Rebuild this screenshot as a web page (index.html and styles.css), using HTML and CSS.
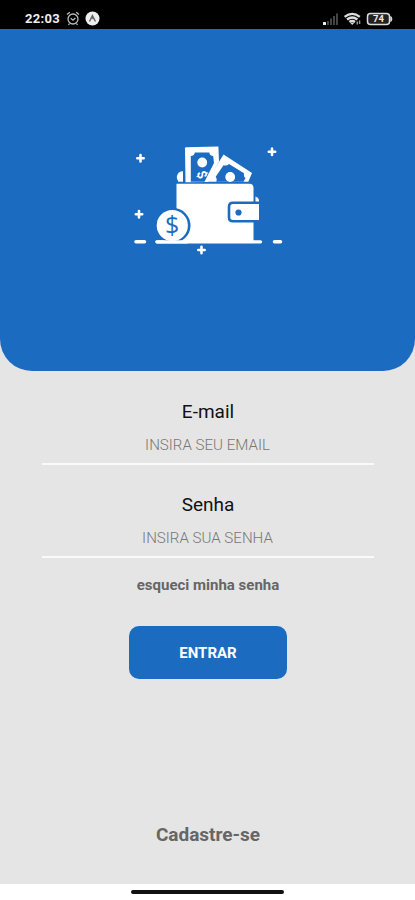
FILE: index.html
```html
<!DOCTYPE html>
<html lang="pt-BR">
<head>
<meta charset="utf-8">
<title>Entrar</title>
<link rel="stylesheet" href="styles.css">
</head>
<body>
<header class="status">
  <div class="status-left">
    <span class="clock">22:03</span>
    <svg class="alarm" width="14" height="15" viewBox="0 0 14 15" fill="none" stroke="#bbb" stroke-width="1.3">
      <circle cx="7" cy="8" r="5"/><path d="M1 3.6 3.8 1.2M13 3.6 10.2 1.2M4.7 7.3 7 9.2 9.4 7M3.5 12.5 2.5 14M10.5 12.5l1 1.5"/>
    </svg>
    <svg class="app" width="15" height="15" viewBox="0 0 15 15">
      <circle cx="7.5" cy="7.5" r="7" fill="#eee"/><path d="M4.5 10.5 7.4 4.6 10.5 10.5M6.8 7.3 7.6 6.3 8.4 8" fill="none" stroke="#666" stroke-width="1.4"/>
    </svg>
  </div>
  <svg width="72" height="16" viewBox="0 0 72 16">
    <rect x="1" y="11" width="3" height="3" rx=".5" fill="#eee"/>
    <path d="M6 14v-4M9 14V7.5M12 14V5M15 14V2.5" stroke="#444" stroke-width="2"/>
    <g fill="none" stroke="#ddd" stroke-width="2.3"><path d="M22.6 5.8q7.600-5.800 15.200 0M25 8.500q5.200-4 10.400 0M27.400 11q2.800-2.200 5.600 0"/></g>
    <path d="M28 11.500h4.500L30.200 14z" fill="#ddd"/><path d="M35.300 13.500v-3M37.600 13V9.500" stroke="#999" stroke-width="1.400"/>
    <rect x="45.500" y="2.500" width="22" height="11" rx="3" fill="#222" stroke="#ddd" stroke-width="1.500"/>
    <path d="M68.800 5.500q2.400 2.500 0 5z" fill="#ddd" stroke="#ddd"/>
    <text class="charge" x="56.500" y="11.300" text-anchor="middle">74</text>
  </svg>
</header>
<main class="screen">
  <section class="hero">
    <svg class="wallet" width="156" height="118" viewBox="130 140 156 118">
      <path d="M185 148.300q0-1 1-1.100l32.400-.8.6 15-11 20.500-22.500.3z" fill="#fff"/>
      <path d="M190.800 156q3.600-.4 4-3.500h14.500q.4 3.200 3.900 3.500l.8 7-9.500 18.800h-13.700z" fill="#1b6cc1"/>
      <circle cx="202.200" cy="162.500" r="4.900" fill="#fff"/>
      <g transform="translate(202 174.800) rotate(70)"><text class="bill-sign" y="4.500" text-anchor="middle">$</text></g>
      <path d="M206.500 181.800 223.600 154.600 252 173l-3.700 8.800z" fill="#fff"/>
      <path d="M216.300 181.800q1.200-3-.6-5L223.500 165.200q3.200 1.200 5.500-1.200l15 9.300q-.6 3.400 1.500 4.700l-2 3.800z" fill="#1b6cc1"/>
      <circle cx="230.200" cy="177" r="4.900" fill="#fff"/>
      <path d="M183 171.300v10.500h-4.600q-3.400-5.500.6-9.200 1.700-1.400 4-1.300z" fill="#fff"/>
      <path d="M176.500 183.800h72.700q4.300 0 4.300 4.300V241h-77z" fill="#fff"/>
      <path d="M255.500 196.500q3.500 1.200 3.500 4.500v2.500h-3.500z" fill="#fff"/>
      <path d="M259 202.800h-26q-4 0-4 4v10.400q0 4 4 4h26" fill="#fff" stroke="#1b6cc1" stroke-width="2.600"/>
      <circle cx="238.500" cy="212.500" r="3.100" fill="#1b6cc1"/>
      <path d="M157 241.800h103.500" stroke="#fff" stroke-width="3.300" stroke-linecap="round"/>
      <path d="M136 241.800h8.500M274.500 241.800h6" stroke="#fff" stroke-width="3.600" stroke-linecap="round"/>
      <circle cx="173" cy="225.500" r="17.500" fill="#1b6cc1"/>
      <circle cx="172.300" cy="225.500" r="15.600" fill="#fff"/>
      <path d="M157 241.800h30" stroke="#fff" stroke-width="3.300" stroke-linecap="round"/>
      <text class="coin-sign" x="172.200" y="233.800" text-anchor="middle">$</text>
      <path d="M140.500 155v6.400M137.300 158.200h6.400M139 211v6.400M135.800 214.200h6.400M201.500 246.800v6.400M198.300 250h6.400M272 148.500v6.400M268.800 151.700h6.400" stroke="#fff" stroke-width="2.600" stroke-linecap="round"/>
    </svg>
  </section>
  <form class="form">
    <label class="label" for="email">E-mail</label>
    <input class="field" id="email" type="email" placeholder="INSIRA SEU EMAIL">
    <label class="label senha" for="senha">Senha</label>
    <input class="field" id="senha" type="password" placeholder="INSIRA SUA SENHA">
    <a class="forgot">esqueci minha senha</a>
    <button class="enter" type="button">ENTRAR</button>
  </form>
  <a class="signup">Cadastre-se</a>
</main>
<footer class="nav"><div class="handle"></div></footer>
</body>
</html>
```
FILE: styles.css
```css
* { box-sizing: border-box; }
body {
  margin: 0;
  height: 900px;
  display: flex;
  flex-direction: column;
  overflow: hidden;
  background: #fff;
  font-family: Roboto, sans-serif;
}
.status {
  height: 29px;
  flex: none;
  display: flex;
  justify-content: space-between;
  align-items: flex-start;
  padding: 11px 21px 0 25px;
  background: #000;
  color: #eee;
}
.status-left { display: flex; align-items: flex-start; }
.clock {
  width: 41px;
  font-size: 13px;
  line-height: 16px;
  font-weight: 700;
  letter-spacing: .3px;
}
.app { margin-left: 5px; }
.charge { font: 700 9.5px Roboto, sans-serif; fill: #eee; }
.screen {
  height: 855px;
  flex: none;
  display: flex;
  flex-direction: column;
  align-items: center;
  background: #e5e5e5;
}
.hero {
  width: 100%;
  height: 342px;
  flex: none;
  padding: 111px 0 0 130px;
  border-radius: 0 0 32px 32px;
  background: #1b6cc1;
}
.wallet { display: block; }
.coin-sign { font: 25px "Open Sans", sans-serif; fill: #1b6cc1; }
.bill-sign { font: 700 13px Roboto, sans-serif; fill: #fff; }
.form {
  width: 332px;
  display: flex;
  flex-direction: column;
  align-items: center;
  padding-top: 29px;
}
.label {
  padding-left: 1px;
  font-size: 19px;
  line-height: 24px;
  color: #111;
}
.field {
  width: 100%;
  height: 41px;
  padding: 3px 0 0;
  border: 0;
  border-bottom: 2px solid #fafafa;
  background: transparent;
  font: 300 15.1px Roboto, sans-serif;
  text-align: center;
}
.field::placeholder { color: #777; opacity: 1; }
.senha { margin-top: 28px; }
.forgot {
  margin-top: 17px;
  padding-left: 1px;
  font-size: 15px;
  line-height: 20px;
  font-weight: 700;
  color: #666;
}
.enter {
  width: 158px;
  height: 53px;
  margin-top: 31px;
  padding: 0 0 0 1px;
  border: 0;
  border-radius: 10px;
  background: #1b6cc1;
  color: #fff;
  font: 700 15px Roboto, sans-serif;
}
.signup {
  margin: auto 0 37px;
  padding-left: 1px;
  font-size: 19px;
  line-height: 24px;
  font-weight: 700;
  color: #666;
}
.nav {
  flex: 1;
  display: flex;
  justify-content: center;
  padding-top: 6px;
}
.handle { width: 153px; height: 4px; border-radius: 2px; background: #111; }
```
